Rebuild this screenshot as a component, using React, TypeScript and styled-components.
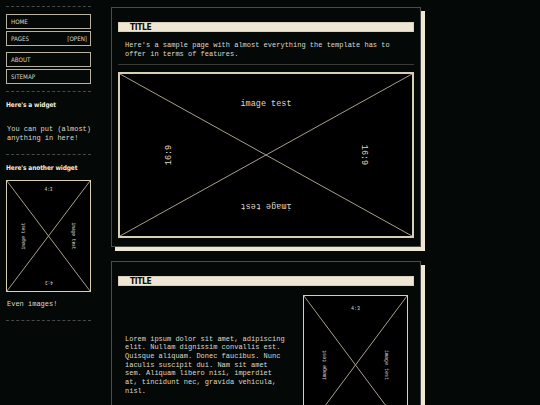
import React from 'react';
import styled, { createGlobalStyle } from 'styled-components';

const cream = '#efe7d4';
const ink = '#ddd8cc';
const mono = '"Liberation Mono", "DejaVu Sans Mono", monospace';
const narrow = '"DejaVu Sans Condensed", "DejaVu Sans", sans-serif';

const GlobalStyle = createGlobalStyle`
  html, body {
    margin: 0;
    background: #040806;
    color: ${ink};
  }
  body {
    font-family: ${mono};
  }
`;

type Side = 'top' | 'bottom' | 'left' | 'right';

interface PlaceholderProps {
  height: number;
  border: number;
  horizontal: string;
  vertical: string;
  edgeInset: number;
  sideInset: number;
  fontSize: number;
}

const ImagePlaceholder: React.FC<PlaceholderProps> = ({
  height, border, horizontal, vertical, edgeInset, sideInset, fontSize,
}) => (
  <ImageBox $height={height} $border={border}>
    <Cross viewBox="0 0 100 100" preserveAspectRatio="none">
      <line x1="0" y1="0" x2="100" y2="100" vectorEffect="non-scaling-stroke" />
      <line x1="100" y1="0" x2="0" y2="100" vectorEffect="non-scaling-stroke" />
    </Cross>
    <ImageLabel $side="top" $inset={edgeInset} $size={fontSize}>{horizontal}</ImageLabel>
    <ImageLabel $side="bottom" $inset={edgeInset} $size={fontSize}>{horizontal}</ImageLabel>
    <ImageLabel $side="left" $inset={sideInset} $size={fontSize}>{vertical}</ImageLabel>
    <ImageLabel $side="right" $inset={sideInset} $size={fontSize}>{vertical}</ImageLabel>
  </ImageBox>
);

const App: React.FC = () => (
  <>
    <GlobalStyle />
    <Page>
      <Sidebar>
        <Rule />
        <Nav>
          <NavGroup>
            <NavItem><span>HOME</span></NavItem>
            <NavItem><span>PAGES</span><span>[OPEN]</span></NavItem>
          </NavGroup>
          <NavGroup>
            <NavItem><span>ABOUT</span></NavItem>
            <NavItem><span>SITEMAP</span></NavItem>
          </NavGroup>
        </Nav>
        <Rule />
        <WidgetTitle>Here&apos;s a widget</WidgetTitle>
        <WidgetText>You can put (almost) anything in here!</WidgetText>
        <Rule />
        <WidgetTitle>Here&apos;s another widget</WidgetTitle>
        <ImagePlaceholder
          height={112}
          border={1}
          horizontal="4:3"
          vertical="image test"
          edgeInset={6}
          sideInset={17}
          fontSize={4.5}
        />
        <WidgetText>Even images!</WidgetText>
        <Rule />
      </Sidebar>

      <Main>
        <Card>
          <TitleBar>TITLE</TitleBar>
          <Paragraph>
            Here&apos;s a sample page with almost everything the template has to offer in terms of features.
          </Paragraph>
          <Divider />
          <ImagePlaceholder
            height={166}
            border={2}
            horizontal="image test"
            vertical="16:9"
            edgeInset={25}
            sideInset={49}
            fontSize={8.5}
          />
        </Card>

        <Card>
          <TitleBar>TITLE</TitleBar>
          <SplitBody>
            <Paragraph>
              Lorem ipsum dolor sit amet, adipiscing elit. Nullam dignissim convallis est.
              Quisque aliquam. Donec faucibus. Nunc iaculis suscipit dui. Nam sit amet
              sem. Aliquam libero nisi, imperdiet at, tincidunt nec, gravida vehicula,
              nisl.
            </Paragraph>
            <ImagePlaceholder
              height={140}
              border={1.5}
              horizontal="4:3"
              vertical="image test"
              edgeInset={10}
              sideInset={21}
              fontSize={5}
            />
          </SplitBody>
        </Card>
      </Main>
    </Page>
  </>
);

const Page = styled.div`
  display: flex;
  align-items: flex-start;
  gap: 20px;
  padding: 6px 0 0 6px;
`;

const Sidebar = styled.aside`
  width: 85px;
  display: flex;
  flex-direction: column;
`;

const Rule = styled.div`
  border-top: 1px dashed #4a4a44;
  height: 0;
`;

const Nav = styled.nav`
  display: flex;
  flex-direction: column;
  gap: 6px;
  margin: 7px 0 7px;
`;

const NavGroup = styled.div`
  display: flex;
  flex-direction: column;
  gap: 2px;
`;

const NavItem = styled.div`
  height: 13px;
  border: 1px solid #b9b2a2;
  display: flex;
  align-items: center;
  justify-content: space-between;
  padding: 0 3px 0 4px;
  font-family: ${narrow};
  font-size: 6.2px;
  color: ${ink};
`;

const WidgetTitle = styled.h3`
  margin: 9px 0 8px;
  font-family: ${narrow};
  font-weight: bold;
  font-size: 6.5px;
  letter-spacing: -0.1px;
  color: #f4eedf;
`;

const WidgetText = styled.p`
  margin: 8px 0 11px 1px;
  font-size: 7px;
  line-height: 9px;
  color: ${ink};
`;

const Main = styled.main`
  display: flex;
  flex-direction: column;
  gap: 14px;
  padding-top: 1px;
`;

const Card = styled.section`
  width: 296px;
  border: 1px solid #4c4c48;
  box-shadow: 4px 4px 0 ${cream};
  padding: 14px 6px 8px;
  background: #040806;
`;

const TitleBar = styled.h2`
  margin: 0;
  height: 8px;
  border: 1px solid #d8d0bd;
  background: ${cream};
  color: #0b0b08;
  font-family: ${narrow};
  font-weight: bold;
  font-size: 8.5px;
  line-height: 8px;
  letter-spacing: -0.4px;
  padding-left: 11px;
`;

const Paragraph = styled.p`
  margin: 9px 0 5px;
  padding: 0 7px;
  font-size: 7px;
  line-height: 9px;
  color: ${ink};
`;

const Divider = styled.div`
  border-top: 1px solid #3a3a36;
  margin-bottom: 7px;
`;

const SplitBody = styled.div`
  display: grid;
  grid-template-columns: 1fr 105px;
  gap: 10px;
  align-items: center;
  margin-top: 9px;
  padding-right: 6px;

  ${Paragraph} {
    margin: 0;
    line-height: 8.7px;
  }
`;

const ImageBox = styled.div<{ $height: number; $border: number }>`
  position: relative;
  box-sizing: border-box;
  height: ${(p) => p.$height}px;
  border: ${(p) => p.$border}px solid #d9ceb6;
  background: #000;
  overflow: hidden;
`;

const Cross = styled.svg`
  position: absolute;
  inset: 0;
  width: 100%;
  height: 100%;
  stroke: #a99f8a;
  stroke-width: 1;
`;

const ImageLabel = styled.span<{ $side: Side; $inset: number; $size: number }>`
  position: absolute;
  white-space: nowrap;
  font-size: ${(p) => p.$size}px;
  line-height: 1.2;
  color: ${ink};
  ${(p) => {
    switch (p.$side) {
      case 'top':
        return `top: ${p.$inset}px; left: 50%; transform: translateX(-50%);`;
      case 'bottom':
        return `bottom: ${p.$inset}px; left: 50%; transform: translateX(-50%) rotate(180deg);`;
      case 'left':
        return `left: ${p.$inset}px; top: 50%; transform: translate(-50%, -50%) rotate(-90deg);`;
      default:
        return `right: ${p.$inset}px; top: 50%; transform: translate(50%, -50%) rotate(90deg);`;
    }
  }}
`;

export default App;
